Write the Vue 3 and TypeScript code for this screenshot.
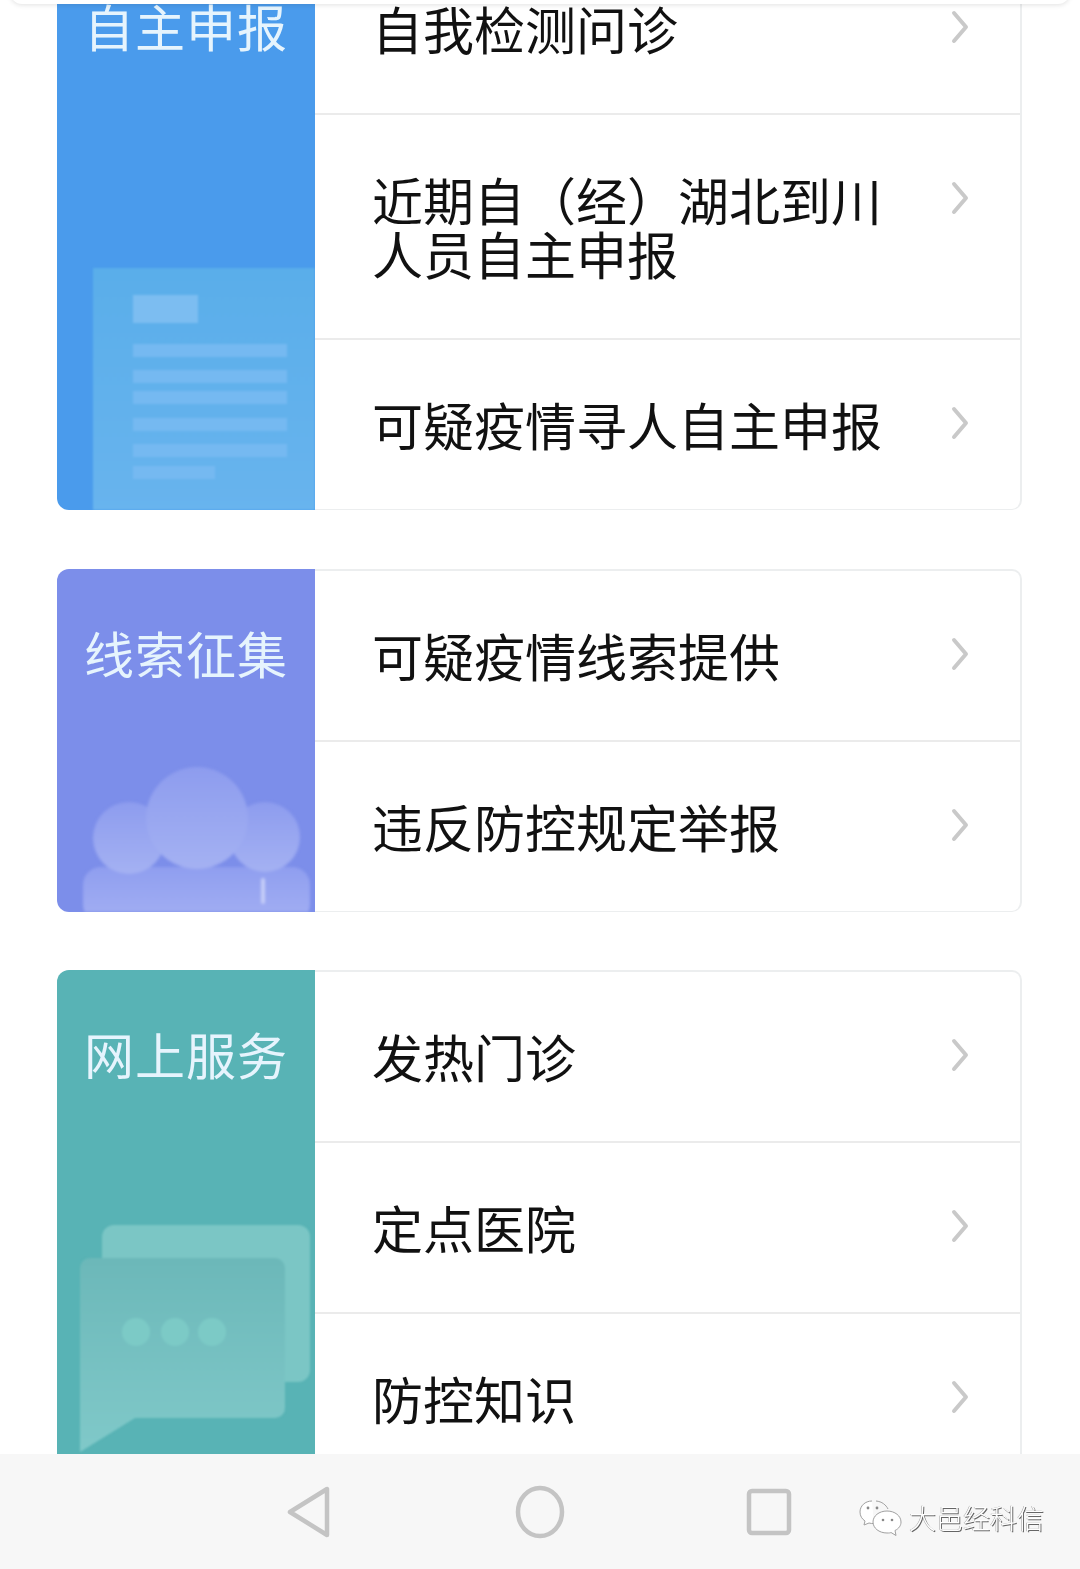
<script setup lang="ts">
interface Group {
  title: string
  theme: string
  rows: string[]
}

const groups: Group[] = [
  { title: '自主申报', theme: 'blue', rows: ['自我检测问诊', '近期自（经）湖北到川人员自主申报', '可疑疫情寻人自主申报'] },
  { title: '线索征集', theme: 'violet', rows: ['可疑疫情线索提供', '违反防控规定举报'] },
  { title: '网上服务', theme: 'teal', rows: ['发热门诊', '定点医院', '防控知识'] }
]

const docLines = [76, 102, 123, 150, 176]
</script>

<template>
  <div class="page">
    <div class="scroll">
      <div class="top-card"></div>
      <section v-for="group in groups" :key="group.title" class="card">
        <aside class="side" :class="group.theme">
          <h2 class="side-title">{{ group.title }}</h2>

          <svg v-if="group.theme === 'blue'" class="art art-doc" width="258" height="242" viewBox="0 0 258 242">
            <defs>
              <linearGradient id="docSheet" x1="0" y1="0" x2="0" y2="1">
                <stop offset="0" stop-color="#5aaeea" />
                <stop offset="1" stop-color="#68b4ee" />
              </linearGradient>
            </defs>
            <rect x="36" y="0" width="222" height="242" fill="url(#docSheet)" />
            <rect x="76" y="27" width="65" height="28" fill="#7cbdf1" />
            <rect v-for="y in docLines" :key="y" x="76" :y="y" width="154" height="13" fill="#75b9f1" />
            <rect x="76" y="198" width="82" height="13" fill="#75b9f1" />
          </svg>

          <svg v-else-if="group.theme === 'violet'" class="art art-cloud" width="258" height="150" viewBox="0 0 258 150">
            <defs>
              <linearGradient id="cloudBase" x1="0" y1="0" x2="0" y2="1">
                <stop offset="0" stop-color="#8f9eef" />
                <stop offset="1" stop-color="#a3aff3" />
              </linearGradient>
              <linearGradient id="cloudTop" x1="0" y1="0" x2="0" y2="1">
                <stop offset="0" stop-color="#8d9cee" />
                <stop offset="1" stop-color="#a4b1f2" />
              </linearGradient>
            </defs>
            <rect x="26" y="105" width="227" height="55" rx="18" fill="url(#cloudBase)" />
            <circle cx="72" cy="76" r="36" fill="url(#cloudTop)" />
            <circle cx="208" cy="75" r="35" fill="url(#cloudTop)" />
            <circle cx="140" cy="56" r="51" fill="url(#cloudTop)" />
            <rect x="204" y="116" width="4" height="26" rx="2" fill="#c6cef8" />
          </svg>

          <svg v-else class="art art-chat" width="258" height="240" viewBox="0 0 258 240">
            <defs>
              <linearGradient id="chatFront" x1="0" y1="0" x2="0" y2="1">
                <stop offset="0" stop-color="#6cb8b9" />
                <stop offset="1" stop-color="#80c9c9" />
              </linearGradient>
            </defs>
            <rect x="45" y="5" width="208" height="157" rx="12" fill="#7bc6c5" />
            <path d="M33 38H218a10 10 0 0 1 10 10V188a10 10 0 0 1-10 10H78L23 232V48a10 10 0 0 1 10-10Z" fill="url(#chatFront)" />
            <circle cx="79" cy="112" r="14" fill="#7ccac6" />
            <circle cx="118" cy="112" r="14" fill="#7ccac6" />
            <circle cx="155" cy="112" r="14" fill="#7ccac6" />
          </svg>
        </aside>

        <ul class="rows">
          <li v-for="row in group.rows" :key="row" class="row">
            <span class="row-text">{{ row }}</span>
            <svg class="chevron" width="20" height="34" viewBox="0 0 20 34">
              <path d="M4 3L16 17L4 31" fill="none" stroke="#c9c9c9" stroke-width="4" stroke-linecap="round" stroke-linejoin="round" />
            </svg>
          </li>
        </ul>
      </section>
    </div>

    <nav class="nav">
      <div class="nav-slot">
        <svg width="46" height="52" viewBox="0 0 46 52">
          <path d="M41 3V49L4 26Z" fill="none" stroke="#c4c4c4" stroke-width="4.500" stroke-linejoin="round" />
        </svg>
      </div>
      <div class="nav-slot">
        <svg width="52" height="54" viewBox="0 0 52 54">
          <ellipse cx="27" cy="27" rx="22" ry="24" fill="none" stroke="#c4c4c4" stroke-width="4.500" />
        </svg>
      </div>
      <div class="nav-slot">
        <svg width="46" height="48" viewBox="0 0 46 48">
          <rect x="3" y="3" width="40" height="42" rx="3" fill="none" stroke="#c4c4c4" stroke-width="4.500" />
        </svg>
      </div>

      <div class="mark">
        <svg width="46" height="38" viewBox="0 0 46 38">
          <path d="M14 2C7 2 2 7 2 13c0 4 2 7 5 9l-1 4 5-2c2 .5 3 .6 5 .5" fill="#fff" stroke="#a0a0a0" stroke-width="1" />
          <path d="M18 2c6 .5 10 4 12 8" fill="none" stroke="#a0a0a0" stroke-width="1" />
          <circle cx="10" cy="9" r="1.400" fill="#888" />
          <circle cx="19" cy="9" r="1.400" fill="#888" />
          <path d="M29 12c-8 0-14 5-14 11s6 11 14 11c2 0 3 0 4-.5l5 3-1-5c4-2 6-5 6-8.500 0-6-6-11-14-11Z" fill="#fff" stroke="#a0a0a0" stroke-width="1" />
          <circle cx="25" cy="21" r="1.300" fill="#888" />
          <circle cx="34" cy="21" r="1.300" fill="#888" />
        </svg>
        <span class="mark-text">大邑经科信</span>
      </div>
    </nav>
  </div>
</template>

<style>
html,
body {
  margin: 0;
  background: #fff;
}
</style>

<style scoped>
.page {
  position: relative;
  display: flex;
  flex-direction: column;
  width: 1080px;
  height: 1569px;
  overflow: hidden;
  background: #fff;
  font-family: "Noto Sans CJK SC", "Liberation Sans", sans-serif;
  filter: blur(0.5px);
}

.scroll {
  position: relative;
  flex: 1;
  min-height: 0;
  overflow: hidden;
  padding: 0 58px 0 57px;
}

.top-card {
  position: absolute;
  z-index: 2;
  top: -30px;
  left: 10px;
  right: 10px;
  height: 34px;
  background: #fff;
  border-radius: 12px;
  box-shadow: 0 1px 5px rgba(0, 0, 0, 0.12);
}

.card {
  display: flex;
  margin-bottom: 58px;
}

.card:first-of-type {
  margin-top: -58px;
  margin-bottom: 59px;
}

.side {
  position: relative;
  flex: 0 0 258px;
  overflow: hidden;
  border-radius: 12px 0 0 12px;
}

.blue {
  background: #4a9bec;
}

.violet {
  background: #7c8eea;
}

.teal {
  background: #58b3b5;
}

.side-title {
  margin: 0;
  padding-top: 56px;
  font-size: 50px;
  font-weight: 400;
  line-height: 54px;
  letter-spacing: 1px;
  text-align: center;
  color: #e6f4fd;
}

.art {
  position: absolute;
  left: 0;
  display: block;
  filter: blur(1px);
}

.art-doc {
  bottom: 0;
}

.art-cloud {
  bottom: 0;
  filter: blur(1.5px);
}

.art-chat {
  top: 250px;
}

.rows {
  flex: 1;
  margin: 0;
  padding: 0;
  list-style: none;
  border: solid #eceeef;
  border-width: 2px 2px 1px 0;
  border-radius: 0 10px 10px 0;
}

.row {
  display: flex;
  justify-content: space-between;
  align-items: flex-start;
  padding: 57px 50px 58px 57px;
}

.row + .row {
  border-top: 2px solid #ebebeb;
}

.row-text {
  width: 530px;
  font-size: 51px;
  line-height: 54px;
  color: #111;
}

.chevron {
  margin-top: 9px;
}

.nav {
  position: relative;
  flex: 0 0 115px;
  display: flex;
  justify-content: center;
  align-items: center;
  padding-right: 3px;
  background: #f7f7f7;
}

.nav-slot {
  display: flex;
  justify-content: center;
  width: 230px;
}

.mark {
  position: absolute;
  top: 45px;
  left: 858px;
  display: flex;
  align-items: center;
  gap: 5px;
}

.mark-text {
  font-size: 27px;
  line-height: 34px;
  font-weight: 300;
  color: #fff;
  text-shadow: 1px 1px 0 #666, -0.5px 0 0 #999;
}
</style>
